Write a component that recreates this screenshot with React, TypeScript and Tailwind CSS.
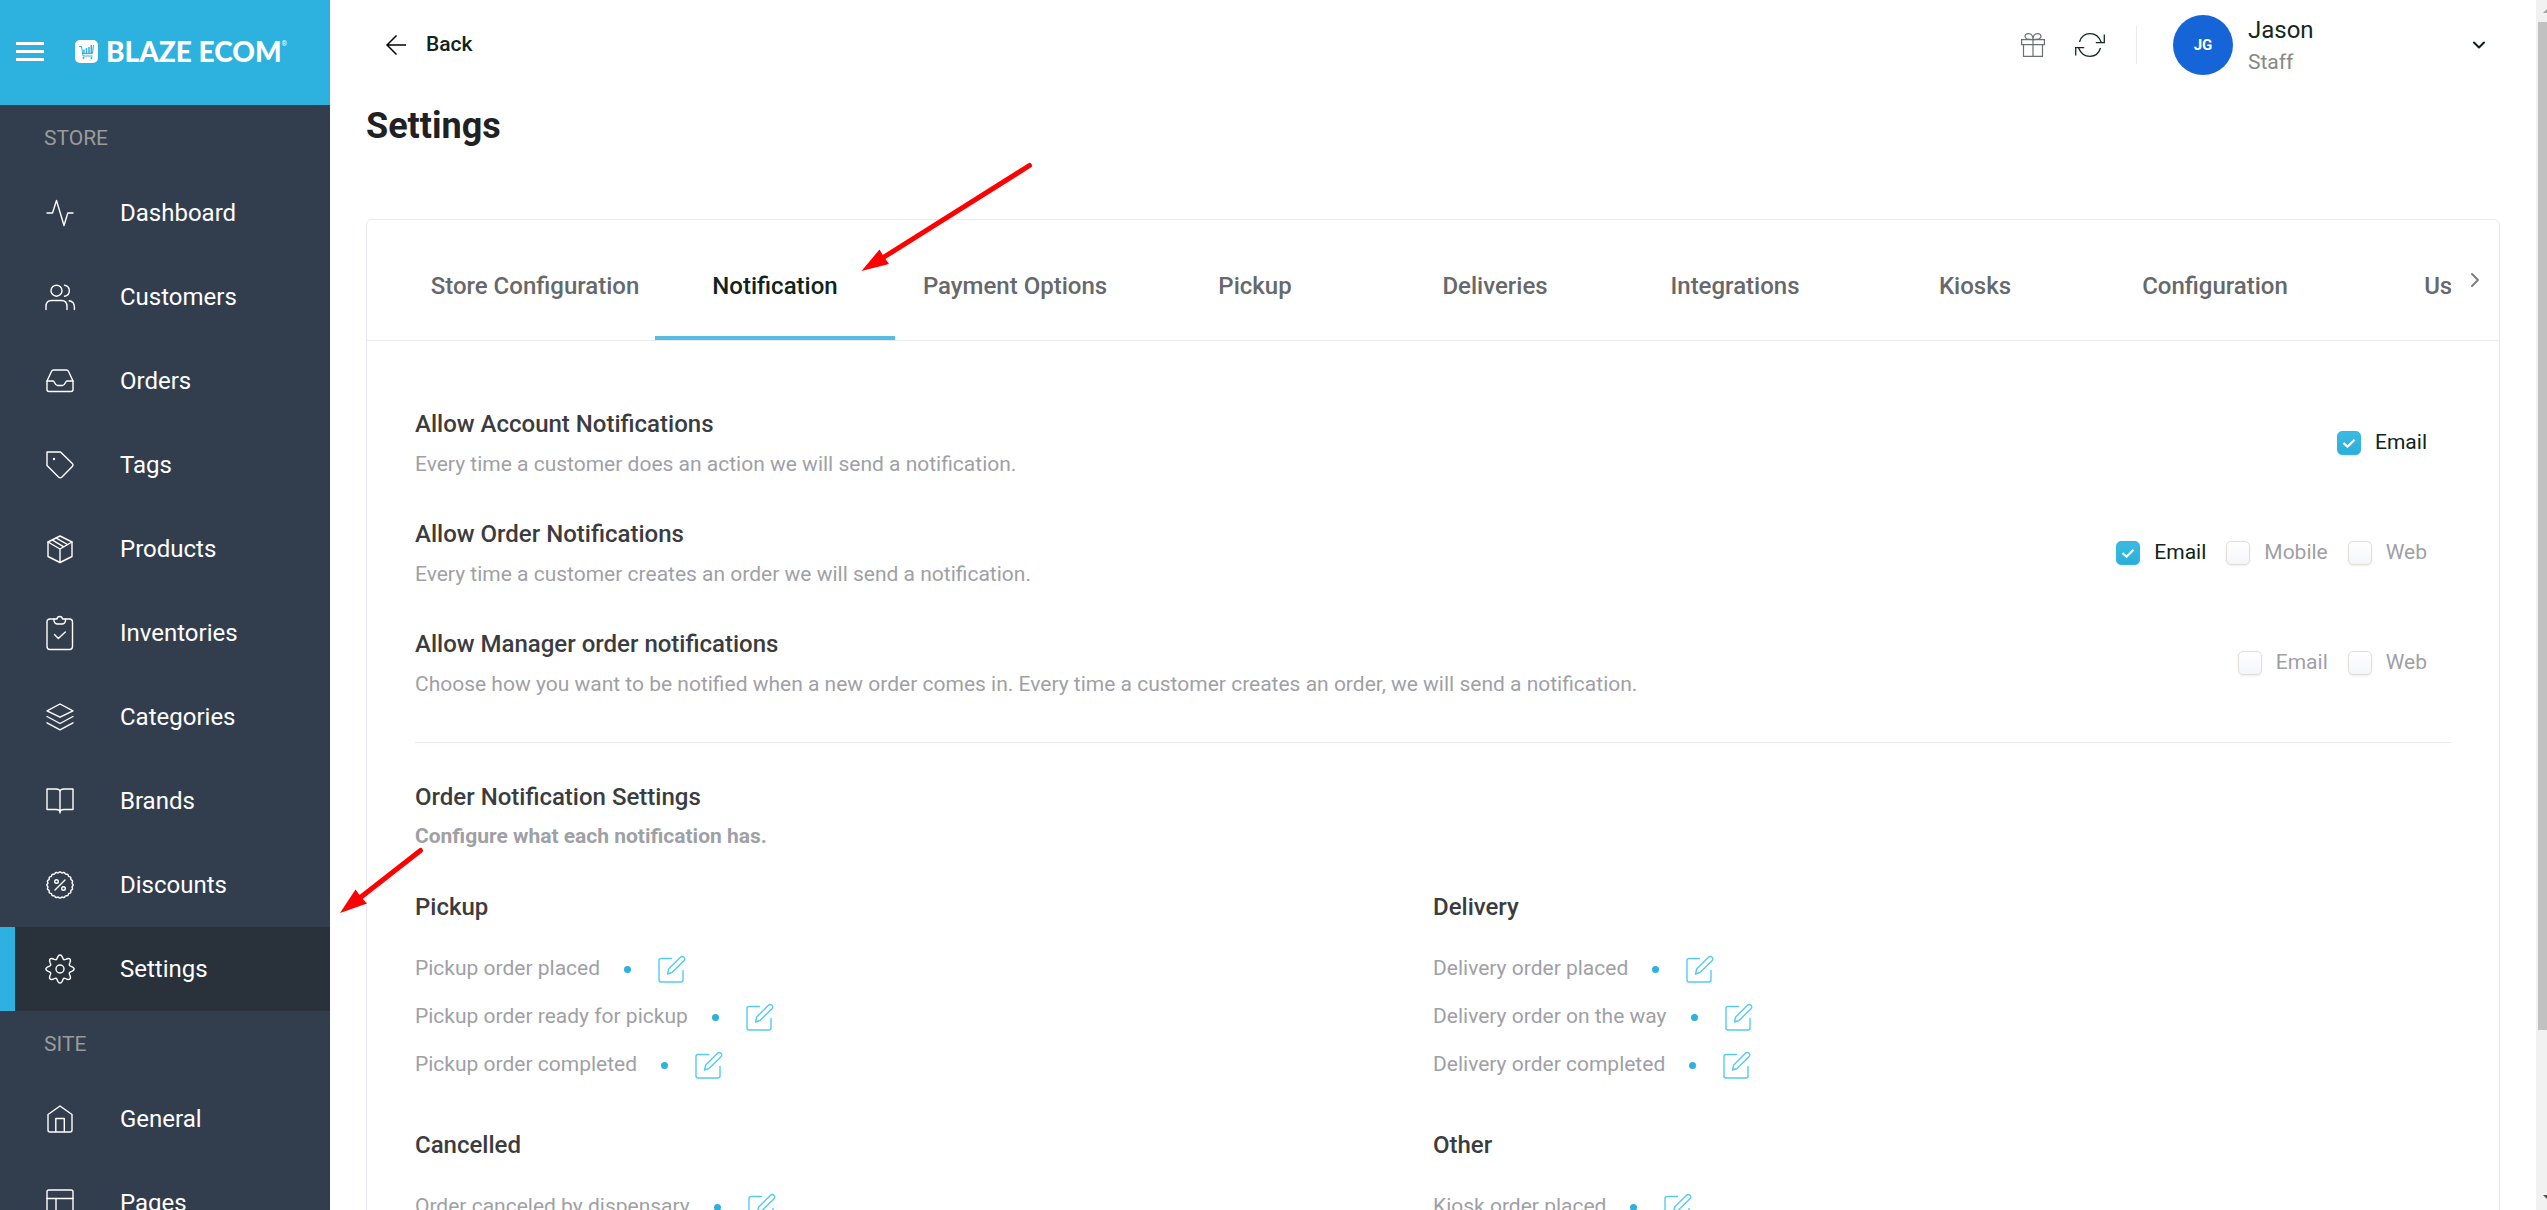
import { ReactNode } from 'react'
import { ChevronDown, ChevronRight } from 'lucide-react'

// closed wavy outline around (15, 15), used by the gear and the discount badge
function wavyCircle(radius: number, depth: number, lobes: number) {
  const points: string[] = []
  for (let deg = 0; deg < 360; deg += 3) {
    const angle = (deg * Math.PI) / 180
    const r = radius + depth * Math.cos(lobes * angle)
    points.push(`${(15 + r * Math.sin(angle)).toFixed(2)} ${(15 - r * Math.cos(angle)).toFixed(2)}`)
  }
  return `M${points.join('L')}Z`
}

const icons: Record<string, ReactNode> = {
  dashboard: <path d="M2 15h5.5l4-12.5 7.5 25L22.8 15H28" />,
  customers: (
    <>
      <circle cx="11.5" cy="8.7" r="5.5" />
      <path d="M1 27.5v-3c0-4 2-6 5.5-6h10c3.5 0 5.5 2 5.5 6v3" />
      <path d="M19.5 3.2c3 .5 4.8 2.5 4.8 5.500s-1.800 5-4.800 5.500M24.200 18.800c3.500.7 5.200 3 5.200 6.200v2.500" />
    </>
  ),
  orders: (
    <>
      <path d="M2 15 6.300 5.800C6.800 4.600 7.500 4 8.700 4h12.600c1.200 0 1.900.6 2.400 1.800L28 15v8.500a2 2 0 0 1-2 2H4a2 2 0 0 1-2-2z" />
      <path d="M2 15h6c1.800 0 1.500 4.500 4.500 4.500h5c3 0 2.700-4.500 4.500-4.500h6" />
    </>
  ),
  tags: (
    <>
      <path d="M2 2h13.500l11.800 11.500a2 2 0 0 1 0 3L17 27a2.500 2.500 0 0 1-3.500 0L2 15.500z" />
      <circle cx="9" cy="9" r=".5" />
    </>
  ),
  products: (
    <>
      <path d="m15 2 12 6v14.500L15 28.500 3 22.500V8z" />
      <path d="m3 8 12 7 12-7M15 15v13.500M7.500 6.200l11.300 6.600M11.300 4.200l11.200 6.300" />
    </>
  ),
  inventories: (
    <>
      <path d="M9 1H5a3 3 0 0 0-3 3v24.500a3 3 0 0 0 3 3h19.500a3 3 0 0 0 3-3V4a3 3 0 0 0-3-3h-4" />
      <path d="M9 1h3c.5-3.300 5-3.300 5.500 0h3v1.500a3.500 3.500 0 0 1-3.500 3.500h-4.500A3.500 3.500 0 0 1 9 2.500zM9.500 16.500l3.800 4 7-6.500" />
    </>
  ),
  categories: (
    <path d="m15 2 13 6.800-13 6.400L2 8.800zM2 14.500l13 7 13-7M2 20.800l13 7 13-7" />
  ),
  brands: (
    <path d="M15 27V6c0-2-2-3-4-3H2v20.500h9c2 0 4 1 4 3 0-2 2-3 4-3h9V3h-9c-2 0-4 1-4 3" />
  ),
  discounts: (
    <>
      <path d={wavyCircle(12.7, 0.5, 20)} />
      <path d="m20 10-10 10" />
      <circle cx="11.5" cy="11.5" r="1.8" />
      <circle cx="18.5" cy="18.5" r="1.8" />
    </>
  ),
  settings: (
    <>
      <path d={wavyCircle(12.1, 2, 8)} />
      <circle cx="15" cy="15" r="4" />
    </>
  ),
  general: (
    <path d="M3 10.500 15 2l12 8.500V26a2 2 0 0 1-2 2H5a2 2 0 0 1-2-2zM10.800 28V14.500h8.500V28" />
  ),
  pages: (
    <>
      <rect x="2" y="2" width="26" height="26" rx="2" />
      <path d="M2 10.500h26M11 10.500V28" />
    </>
  ),
}

const storeLinks = [
  { icon: 'dashboard', label: 'Dashboard' },
  { icon: 'customers', label: 'Customers' },
  { icon: 'orders', label: 'Orders' },
  { icon: 'tags', label: 'Tags' },
  { icon: 'products', label: 'Products' },
  { icon: 'inventories', label: 'Inventories' },
  { icon: 'categories', label: 'Categories' },
  { icon: 'brands', label: 'Brands' },
  { icon: 'discounts', label: 'Discounts' },
  { icon: 'settings', label: 'Settings', active: true },
]

const siteLinks = [
  { icon: 'general', label: 'General' },
  { icon: 'pages', label: 'Pages' },
]

const tabs = [
  'Store Configuration',
  'Notification',
  'Payment Options',
  'Pickup',
  'Deliveries',
  'Integrations',
  'Kiosks',
  'Configuration',
  'Users',
]

const channelRows = [
  {
    title: 'Allow Account Notifications',
    text: 'Every time a customer does an action we will send a notification.',
    channels: [{ label: 'Email', checked: true }],
  },
  {
    title: 'Allow Order Notifications',
    text: 'Every time a customer creates an order we will send a notification.',
    channels: [
      { label: 'Email', checked: true },
      { label: 'Mobile', checked: false },
      { label: 'Web', checked: false },
    ],
  },
  {
    title: 'Allow Manager order notifications',
    text: 'Choose how you want to be notified when a new order comes in. Every time a customer creates an order, we will send a notification.',
    channels: [
      { label: 'Email', checked: false },
      { label: 'Web', checked: false },
    ],
  },
]

const groups = [
  { title: 'Pickup', items: ['Pickup order placed', 'Pickup order ready for pickup', 'Pickup order completed'] },
  { title: 'Delivery', items: ['Delivery order placed', 'Delivery order on the way', 'Delivery order completed'] },
  { title: 'Cancelled', items: ['Order canceled by dispensary'] },
  { title: 'Other', items: ['Kiosk order placed'] },
]

interface NavLinkProps {
  icon: string
  label: string
  active?: boolean
}

function NavLink({ icon, label, active }: NavLinkProps) {
  return (
    <a
      href="#"
      className={
        active
          ? 'flex items-center h-21 gap-[45px] pl-[30px] border-l-[15px] border-[#2db1de] bg-[#29323b] text-2xl text-white'
          : 'flex items-center h-21 gap-[45px] pl-[45px] text-2xl text-white'
      }
    >
      <svg
        viewBox="0 0 30 30"
        className="size-[30px] overflow-visible"
        fill="none"
        stroke="currentColor"
        strokeWidth="1.4"
        strokeLinecap="round"
        strokeLinejoin="round"
      >
        {icons[icon]}
      </svg>
      {label}
    </a>
  )
}

function Sidebar() {
  return (
    <aside className="w-[330px] shrink-0 bg-[#323e4e]">
      <div className="flex items-center h-[105px] px-4 pb-0.5 bg-[#2db1de] text-white">
        <button type="button" aria-label="Menu" className="flex flex-col gap-[5px] w-7 mr-[31px]">
          <span className="h-[3px] w-full bg-white" />
          <span className="h-[3px] w-full bg-white" />
          <span className="h-[3px] w-full bg-white" />
        </button>
        <svg viewBox="0 0 23 23" className="size-[23px] mr-2" fill="none">
          <rect width="23" height="23" rx="5" fill="#fff" />
          <path d="M4 6.500h2.500l1.500 9.500h9.500M7 13.500h10.500L18.500 5" stroke="#2db1de" strokeWidth="1" />
          <path d="M9 13V9.500M11.500 13V8M14 13V7M16.300 13V5" stroke="#2db1de" strokeWidth="1.5" />
          <circle cx="8.5" cy="18" r="1" fill="#2db1de" />
          <circle cx="16.5" cy="18" r="1" fill="#2db1de" />
        </svg>
        <span className="pb-0.5 font-['Lato',sans-serif] font-black text-[28px] leading-8">BLAZE ECOM</span>
        <span className="self-start mt-10 text-[7px] leading-2">®</span>
      </div>
      <nav>
        <h2 className="h-[66px] pl-11 leading-[66px] text-[21px] text-[#9b9b9b]">STORE</h2>
        {storeLinks.map((link) => (
          <NavLink key={link.label} {...link} />
        ))}
        <h2 className="h-[66px] pl-11 leading-[66px] text-[21px] text-[#9b9b9b]">SITE</h2>
        {siteLinks.map((link) => (
          <NavLink key={link.label} {...link} />
        ))}
      </nav>
    </aside>
  )
}

function Header() {
  return (
    <header className="flex items-center justify-between h-[90px] pl-5 pr-[11px]">
      <button type="button" className="flex items-center gap-5 text-[21px] font-medium text-[#10241b]">
        <svg viewBox="0 0 20 20" className="size-5" fill="none" stroke="#000" strokeWidth="1.5">
          <path d="M20 10H1M10.500.500 1 10l9.500 9.500" />
        </svg>
        Back
      </button>
      <div className="flex items-center">
        <button type="button" aria-label="Gifts" className="mr-[30px]">
          <svg viewBox="0 0 24 24" className="size-6" fill="none" stroke="#6b7070" strokeWidth="1.2">
            <path d="M.6 6.600h22.800v5H.6zM2.500 11.600h19v11.800h-19zM12 6.600v16.800" />
            <path d="M12 6.600C8 6.600 4 6 4 3.500 4 1.500 5.500.6 7.500.6 10.500.6 12 3.500 12 6.600zM12 6.600c4 0 8-.6 8-3.100C20 1.500 18.500.6 16.500.6 13.500.6 12 3.500 12 6.600z" />
          </svg>
        </button>
        <button type="button" aria-label="Refresh" className="mr-[31px]">
          <svg viewBox="0 0 30 24" className="w-[30px] h-6" fill="none" stroke="#13291f" strokeWidth="1.3">
            <path d="M4.500 9C6 4 10 .7 15 .7c5.500 0 9.500 3.500 11.500 9M29.300 1.500v8.200h-8.500" />
            <path d="M25.500 15c-1.500 5-5.500 8.300-10.500 8.300-5.500 0-9.500-3.500-11.500-8.600M.7 22.500v-7.800h8.500" />
          </svg>
        </button>
        <div className="w-px h-[38px] mr-9 bg-[#e8eaf1]" />
        <button type="button" className="flex items-center w-[316px] text-left">
          <span className="flex items-center justify-center size-[60px] mr-[15px] rounded-full bg-[#1565d8] text-[15px] font-bold text-white">
            JG
          </span>
          <span className="flex flex-col flex-1 pt-0.5">
            <span className="text-2xl leading-8 text-[#13291f]">Jason</span>
            <span className="text-[21px] leading-8 text-[#868788]">Staff</span>
          </span>
          <ChevronDown className="size-5 text-[#10241b]" strokeWidth={2.5} />
        </button>
      </div>
    </header>
  )
}

function Tabs() {
  return (
    <div className="relative flex h-[121px] px-12 border-b border-[#e8eaf1]">
      <div role="tablist" className="flex flex-1 overflow-hidden">
        {tabs.map((tab) => (
          <button
            key={tab}
            type="button"
            role="tab"
            aria-selected={tab === 'Notification'}
            className={
              tab === 'Notification'
                ? 'w-60 shrink-0 pt-4 border-b-4 border-[#56bce2] text-2xl font-medium text-[#10241b]'
                : 'w-60 shrink-0 pt-4 border-b-4 border-transparent text-2xl font-medium text-[#66686b]'
            }
          >
            {tab}
          </button>
        ))}
      </div>
      <button type="button" aria-label="Next tabs" className="absolute right-3 top-12">
        <ChevronRight className="size-6 text-[#7d7f82]" />
      </button>
    </div>
  )
}

interface ChannelProps {
  label: string
  checked: boolean
}

function Channel({ label, checked }: ChannelProps) {
  return (
    <label className={checked ? 'flex items-center text-[21px] text-[#10241b]' : 'flex items-center text-[21px] text-[#9f9fa6]'}>
      <span className="relative mr-3.5 size-6">
        <input
          type="checkbox"
          defaultChecked={checked}
          className="peer block appearance-none size-6 rounded-[5px] border border-[#e0ded6] bg-linear-to-b from-white to-[#f5f6fa] shadow-[0_1px_2px_rgba(0,0,0,0.08)] checked:border-[#35b7e0] checked:from-[#3bbbe2] checked:to-[#2baedb]"
        />
        <svg
          viewBox="0 0 24 24"
          className="absolute inset-0 hidden peer-checked:block pointer-events-none"
          fill="none"
          stroke="#fff"
          strokeWidth="2.2"
        >
          <path d="m6.500 12 4 3.700 7-7" />
        </svg>
      </span>
      {label}
    </label>
  )
}

function EditIcon() {
  return (
    <svg viewBox="0 0 28 28" className="size-7" fill="none" stroke="#55caf2" strokeWidth="1.4" strokeLinecap="round" strokeLinejoin="round">
      <path d="M13.500 3.500H3a2 2 0 0 0-2 2V25a2 2 0 0 0 2 2h20a2 2 0 0 0 2-2V15.500" />
      <path d="m9.500 19 1.200-5L22.500 2.200a2.400 2.400 0 0 1 3.500 0 2.400 2.400 0 0 1 0 3.500L14 17.500z" />
    </svg>
  )
}

export default function App() {
  return (
    <div className="flex h-screen overflow-hidden bg-white font-['Roboto',sans-serif]">
      <Sidebar />

      <main className="relative flex-1 min-w-0 px-9">
        <Header />
        <h1 className="mt-[15px] mb-18 text-4xl leading-[42px] font-bold text-[#1f2124]">Settings</h1>

        <section className="border border-[#e8eaf1] rounded-md">
          <Tabs />

          <div className="px-12 pt-[65px]">
            <div className="flex flex-col gap-[37px] pb-[43px] border-b border-[#e8eaf1]">
              {channelRows.map((row) => (
                <div key={row.title} className="flex items-center justify-between pr-6">
                  <div>
                    <h2 className="mb-[7px] text-2xl leading-9 font-medium text-[#3b3c40]">{row.title}</h2>
                    <p className="text-[21px] leading-[30px] text-[#9f9fa6]">{row.text}</p>
                  </div>
                  <div className="flex gap-5">
                    {row.channels.map((channel) => (
                      <Channel key={channel.label} {...channel} />
                    ))}
                  </div>
                </div>
              ))}
            </div>

            <h2 className="mt-9 mb-1.5 text-2xl leading-9 font-medium text-[#3b3c40]">Order Notification Settings</h2>
            <p className="text-[21px] leading-[30px] font-bold text-[#9f9fa6]">Configure what each notification has.</p>

            <div className="grid grid-cols-2">
              {groups.map((group) => (
                <div key={group.title} className="pt-[38px]">
                  <h3 className="mb-5 text-2xl leading-9 font-medium text-[#3b3c40]">{group.title}</h3>
                  <ul>
                    {group.items.map((item) => (
                      <li key={item} className="flex items-center h-12 text-[21px] text-[#9f9fa6]">
                        {item}
                        <span className="size-[7px] ml-6 mr-[27px] rounded-full bg-[#2db1de]" />
                        <button type="button" aria-label={`Edit ${item}`}>
                          <EditIcon />
                        </button>
                      </li>
                    ))}
                  </ul>
                </div>
              ))}
            </div>
          </div>
        </section>

        {/* pointers to the tab and to the menu entry */}
        <svg viewBox="0 0 180 120" className="absolute left-[525px] top-[158px] w-[180px] h-[120px] pointer-events-none">
          <path d="M174.500 7.500 29 99" stroke="#f00" strokeWidth="5" strokeLinecap="round" />
          <path d="M6.500 113 24.500 91.500 29 99l5 7z" fill="#f00" />
        </svg>
        <svg viewBox="0 0 100 80" className="absolute left-[5px] top-[840px] w-[100px] h-20 pointer-events-none">
          <path d="M85.500 10.500 26 57" stroke="#f00" strokeWidth="5" strokeLinecap="round" />
          <path d="M5 73 20.500 49.500 26 57l6 6.500z" fill="#f00" />
        </svg>
      </main>

      <div className="flex flex-col w-[11px] shrink-0 pl-0.5 overflow-hidden bg-[#f1f1f1]">
        <svg viewBox="0 0 9 22" className="w-[9px] h-[22px] shrink-0" fill="#a3a3a3">
          <path d="M5 13h4V9z" />
        </svg>
        <div className="h-5/6 bg-[#c1c1c1]" />
        <svg viewBox="0 0 9 22" className="w-[9px] h-[22px] shrink-0 mt-auto" fill="#505050">
          <path d="M5 7h4v4z" />
        </svg>
      </div>
    </div>
  )
}
